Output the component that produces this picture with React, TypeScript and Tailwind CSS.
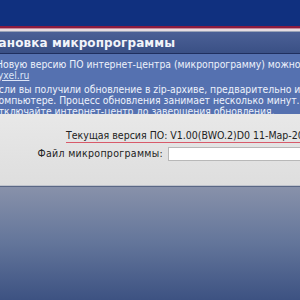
import React from "react";

export default function App() {
  const font = { fontFamily: '"DejaVu Sans Condensed", "DejaVu Sans", Verdana, sans-serif' };
  return (
    <div className="w-[300px] h-[300px] overflow-hidden flex flex-col" style={font}>
      {/* top header */}
      <div className="h-[26px] bg-[#10307f] shrink-0" />
      <div className="h-[2px] bg-[#8a1c40] shrink-0" />
      <div className="h-[1px] bg-[#c98a9a] shrink-0" />
      <div className="h-[2px] bg-[#e6dde2] shrink-0" />
      <div className="h-[1px] bg-[#9aa3b8] shrink-0" />
      {/* title bar */}
      <div className="h-[22px] bg-gradient-to-b from-[#4b6096] to-[#3a5085] shrink-0 flex items-center overflow-hidden border-b border-[#1f2f5e]">
        <div className="-ml-[25px] pt-[1px] whitespace-nowrap text-[12px] font-bold text-[#f2f4fa] tracking-[0.1px]" style={{ fontFamily: '"DejaVu Sans", Verdana, sans-serif' }}>
          Установка микропрограммы
        </div>
      </div>
      {/* blue info panel */}
      <div className="h-[60px] bg-[#5571b0] shrink-0 overflow-hidden pt-[5px] text-[10.3px] leading-[11px] text-[#eef2fb]">
        <div className="-ml-[4px] whitespace-nowrap">Новую версию ПО интернет-центра (микропрограмму) можно получить на сайте</div>
        <div className="-ml-[7px] whitespace-nowrap text-[#dde5f7] underline">zyxel.ru</div>
        <div className="-ml-[7px] whitespace-nowrap mt-[3px]">Если вы получили обновление в zip-архиве, предварительно извлеките его на</div>
        <div className="-ml-[7px] whitespace-nowrap">компьютере. Процесс обновления занимает несколько минут. Пожалуйста, не</div>
        <div className="-ml-[7px] whitespace-nowrap">отключайте интернет-центр до завершения обновления.</div>
      </div>
      {/* form area */}
      <div className="h-[71px] bg-gradient-to-b from-[#e8e8e8] to-[#dedede] shrink-0 overflow-hidden text-[10.5px] text-[#222]">
        <div className="pl-[66px] pt-[14px] whitespace-nowrap">
          <span className="border-b border-[#d85a6a] pb-[1px] pr-[20px]">Текущая версия ПО: V1.00(BWO.2)D0 11-Мар-2011</span>
        </div>
        <div className="flex items-center mt-[2px] whitespace-nowrap">
          <span className="w-[168px] pr-[5px] text-right shrink-0 tracking-[0.3px]">Файл микропрограммы:</span>
          <div className="h-[14px] w-[200px] shrink-0 bg-white border border-[#b8b8b8]" />
        </div>
      </div>
      <div className="h-[1px] bg-[#bfc3cc] shrink-0" />
      <div className="h-[1px] bg-[#5a6785] shrink-0" />
      {/* bottom gradient */}
      <div className="flex-1 bg-gradient-to-b from-[#8891aa] via-[#63759a] to-[#3d5282]" />
    </div>
  );
}
